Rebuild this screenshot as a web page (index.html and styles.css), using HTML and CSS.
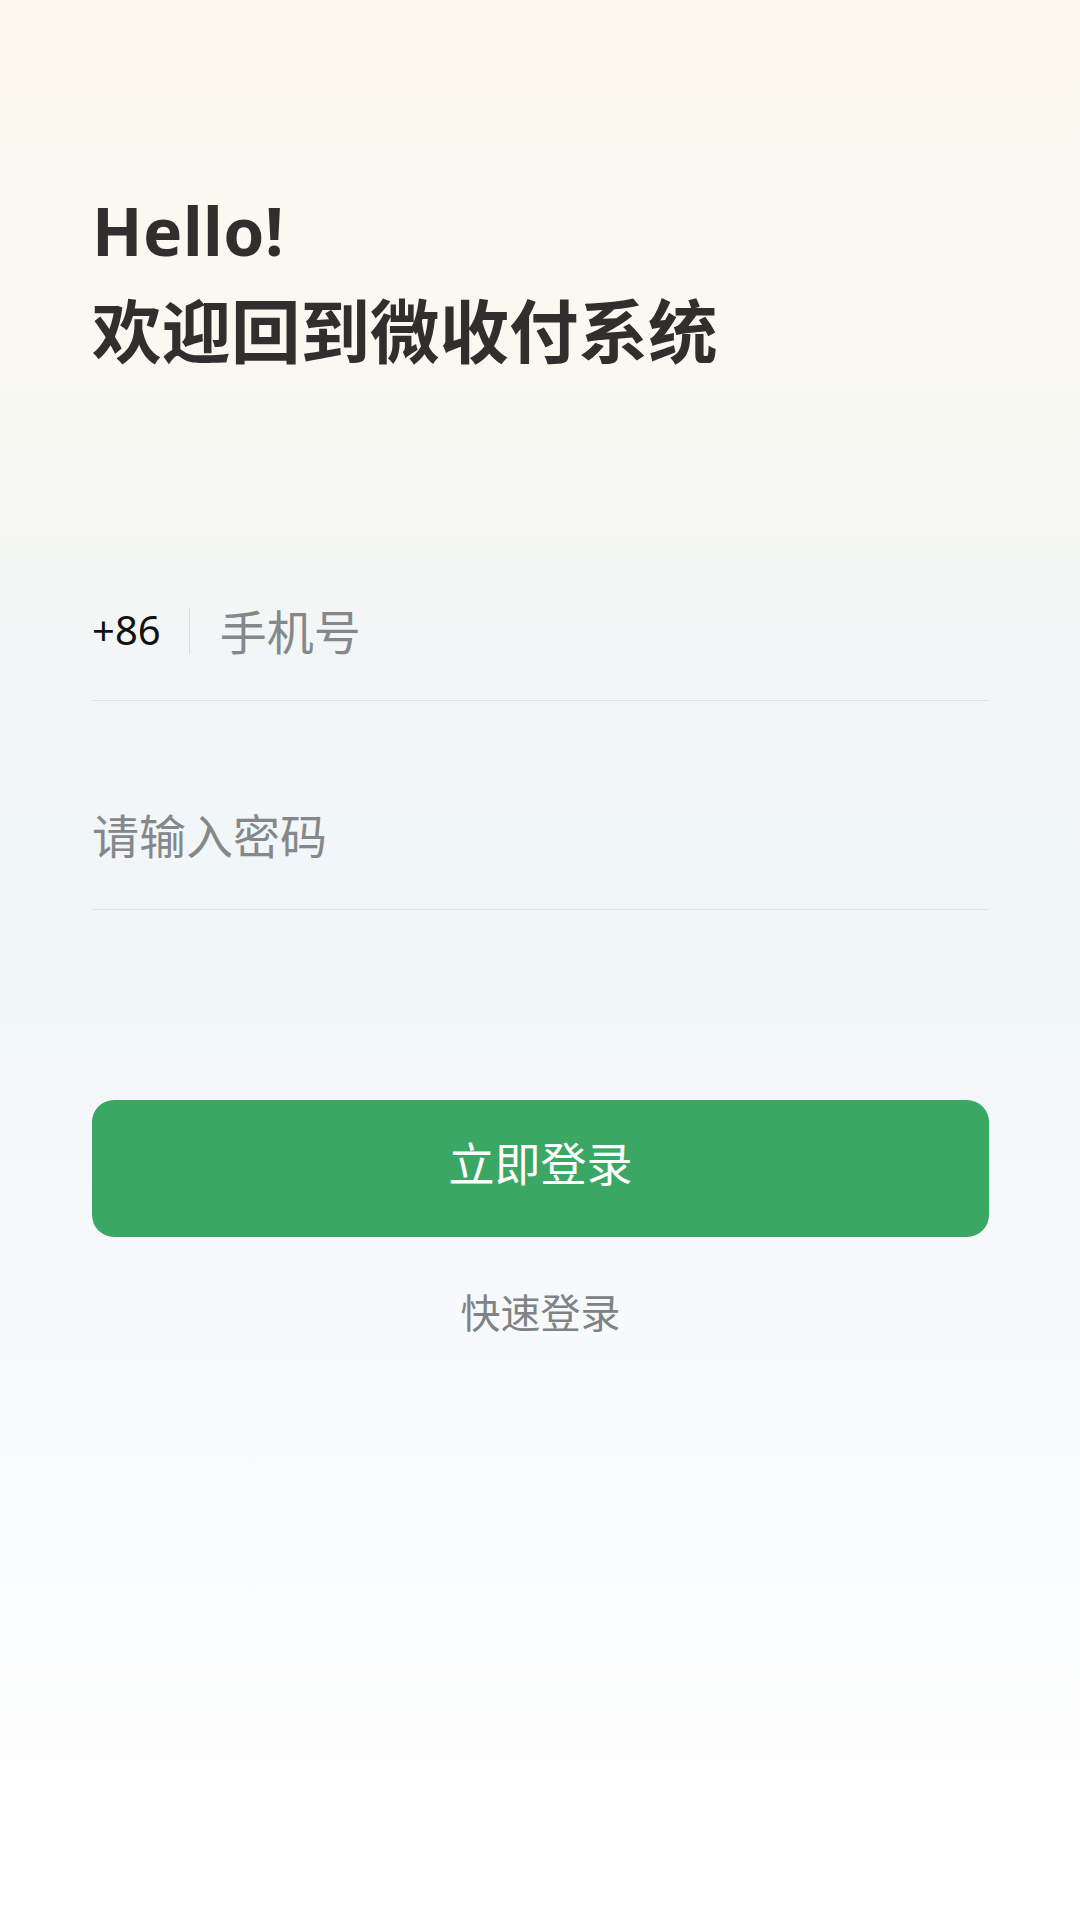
FILE: index.html
```html
<!DOCTYPE html>
<html lang="zh-CN">
<head>
<meta charset="utf-8">
<title>登录</title>
<link rel="stylesheet" href="styles.css">
</head>
<body>
<div class="page">
  <h1 class="title">
    <span class="line hello">Hello!</span>
    <span class="line">欢迎回到微收付系统</span>
  </h1>
  <div class="field phone">
    <span class="code">+86</span>
    <span class="sep"></span>
    <span class="ph">手机号</span>
  </div>
  <div class="field pwd">
    <span class="ph">请输入密码</span>
  </div>
  <button class="login">立即登录</button>
  <div class="quick">快速登录</div>
</div>
</body>
</html>
```
FILE: styles.css
```css
html, body {
  margin: 0;
  padding: 0;
}
body {
  width: 1080px;
  height: 1920px;
  background: linear-gradient(180deg, #fdf9ee 0%, #f9f8f1 18%, #f3f6f6 33%, #f1f6f9 50%, #f6f9fb 65%, #fcfdfe 85%, #ffffff 100%);
  font-family: "Noto Sans CJK SC", "Noto Sans", sans-serif;
}
.page {
  padding: 181px 91px 0 92px;
  display: flex;
  flex-direction: column;
}
.title {
  margin: 0;
  font-size: 69.5px;
  font-weight: 700;
  line-height: 98px;
  color: #302f2d;
  display: flex;
  flex-direction: column;
}
.hello {
  font-family: "Noto Sans", "Noto Sans CJK SC", sans-serif;
  font-size: 66px;
  letter-spacing: 0.5px;
}
.field {
  margin-top: 187px;
  height: 136px;
  border-bottom: 1px solid #dfe3e5;
  display: flex;
  align-items: center;
}
.field > span {
  position: relative;
  top: -3px;
}
.pwd {
  margin-top: 72px;
}
.pwd > span {
  top: -8px;
}
.code {
  font-size: 40px;
  color: #111;
  font-family: "Noto Sans", "Noto Sans CJK SC", sans-serif;
}
.field > .sep {
  width: 1px;
  height: 46px;
  background: #dcdcdc;
  margin: 0 30px 0 28px;
  top: -1px;
}
.ph {
  font-size: 47px;
  color: #85888a;
}
.login {
  margin-top: 190px;
  height: 137px;
  border: none;
  border-radius: 22px;
  background: #3ba764;
  color: #ffffff;
  font-family: "Noto Sans CJK SC", sans-serif;
  font-size: 46px;
  padding: 0 0 16px 0;
}
.quick {
  margin-top: 46px;
  text-align: center;
  font-size: 40px;
  line-height: 56px;
  color: #808385;
}
```
